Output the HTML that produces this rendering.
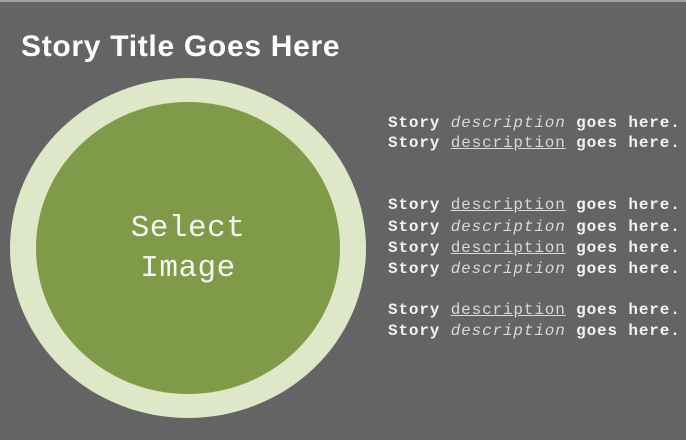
<!DOCTYPE html>
<html><head><style>
body{margin:0;width:686px;height:440px;background:#646464;overflow:hidden;position:relative;font-family:"Liberation Sans",sans-serif}
.top{position:absolute;left:0;top:0;width:686px;height:2px;background:#a0a0a0}
.title{position:absolute;left:21px;top:29px;font-size:30px;font-weight:bold;color:#fff;letter-spacing:0.7px;white-space:nowrap;line-height:36px}
.outer{position:absolute;left:10px;top:78px;width:356px;height:340px;border-radius:50%;background:#dfe7c9}
.inner{position:absolute;left:36px;top:102px;width:304px;height:292px;border-radius:50%;background:#7f9a48}
.sel{position:absolute;left:36px;top:209px;width:304px;text-align:center;color:#f4f6ee;font-family:"Liberation Mono",monospace;font-size:31px;line-height:40px;letter-spacing:0.5px}
.l{position:absolute;left:388px;font-family:"Liberation Mono",monospace;font-size:16px;letter-spacing:0.85px;color:#f2f2f2;white-space:nowrap;line-height:20px;font-weight:bold}
.l i{color:#d8d8d8;font-weight:normal}
.l u{color:#d8d8d8;font-weight:normal}
</style></head><body>
<div class="top"></div>
<div class="title">Story Title Goes Here</div>
<div class="outer"></div><div class="inner"></div>
<div class="sel">Select<br>Image</div>
<div class="l" style="top:113px">Story <i>description</i> goes here.</div>
<div class="l" style="top:133px">Story <u>description</u> goes here.</div>
<div class="l" style="top:195px">Story <u>description</u> goes here.</div>
<div class="l" style="top:217px">Story <i>description</i> goes here.</div>
<div class="l" style="top:238px">Story <u>description</u> goes here.</div>
<div class="l" style="top:259px">Story <i>description</i> goes here.</div>
<div class="l" style="top:300px">Story <u>description</u> goes here.</div>
<div class="l" style="top:321px">Story <i>description</i> goes here.</div>
</body></html>
